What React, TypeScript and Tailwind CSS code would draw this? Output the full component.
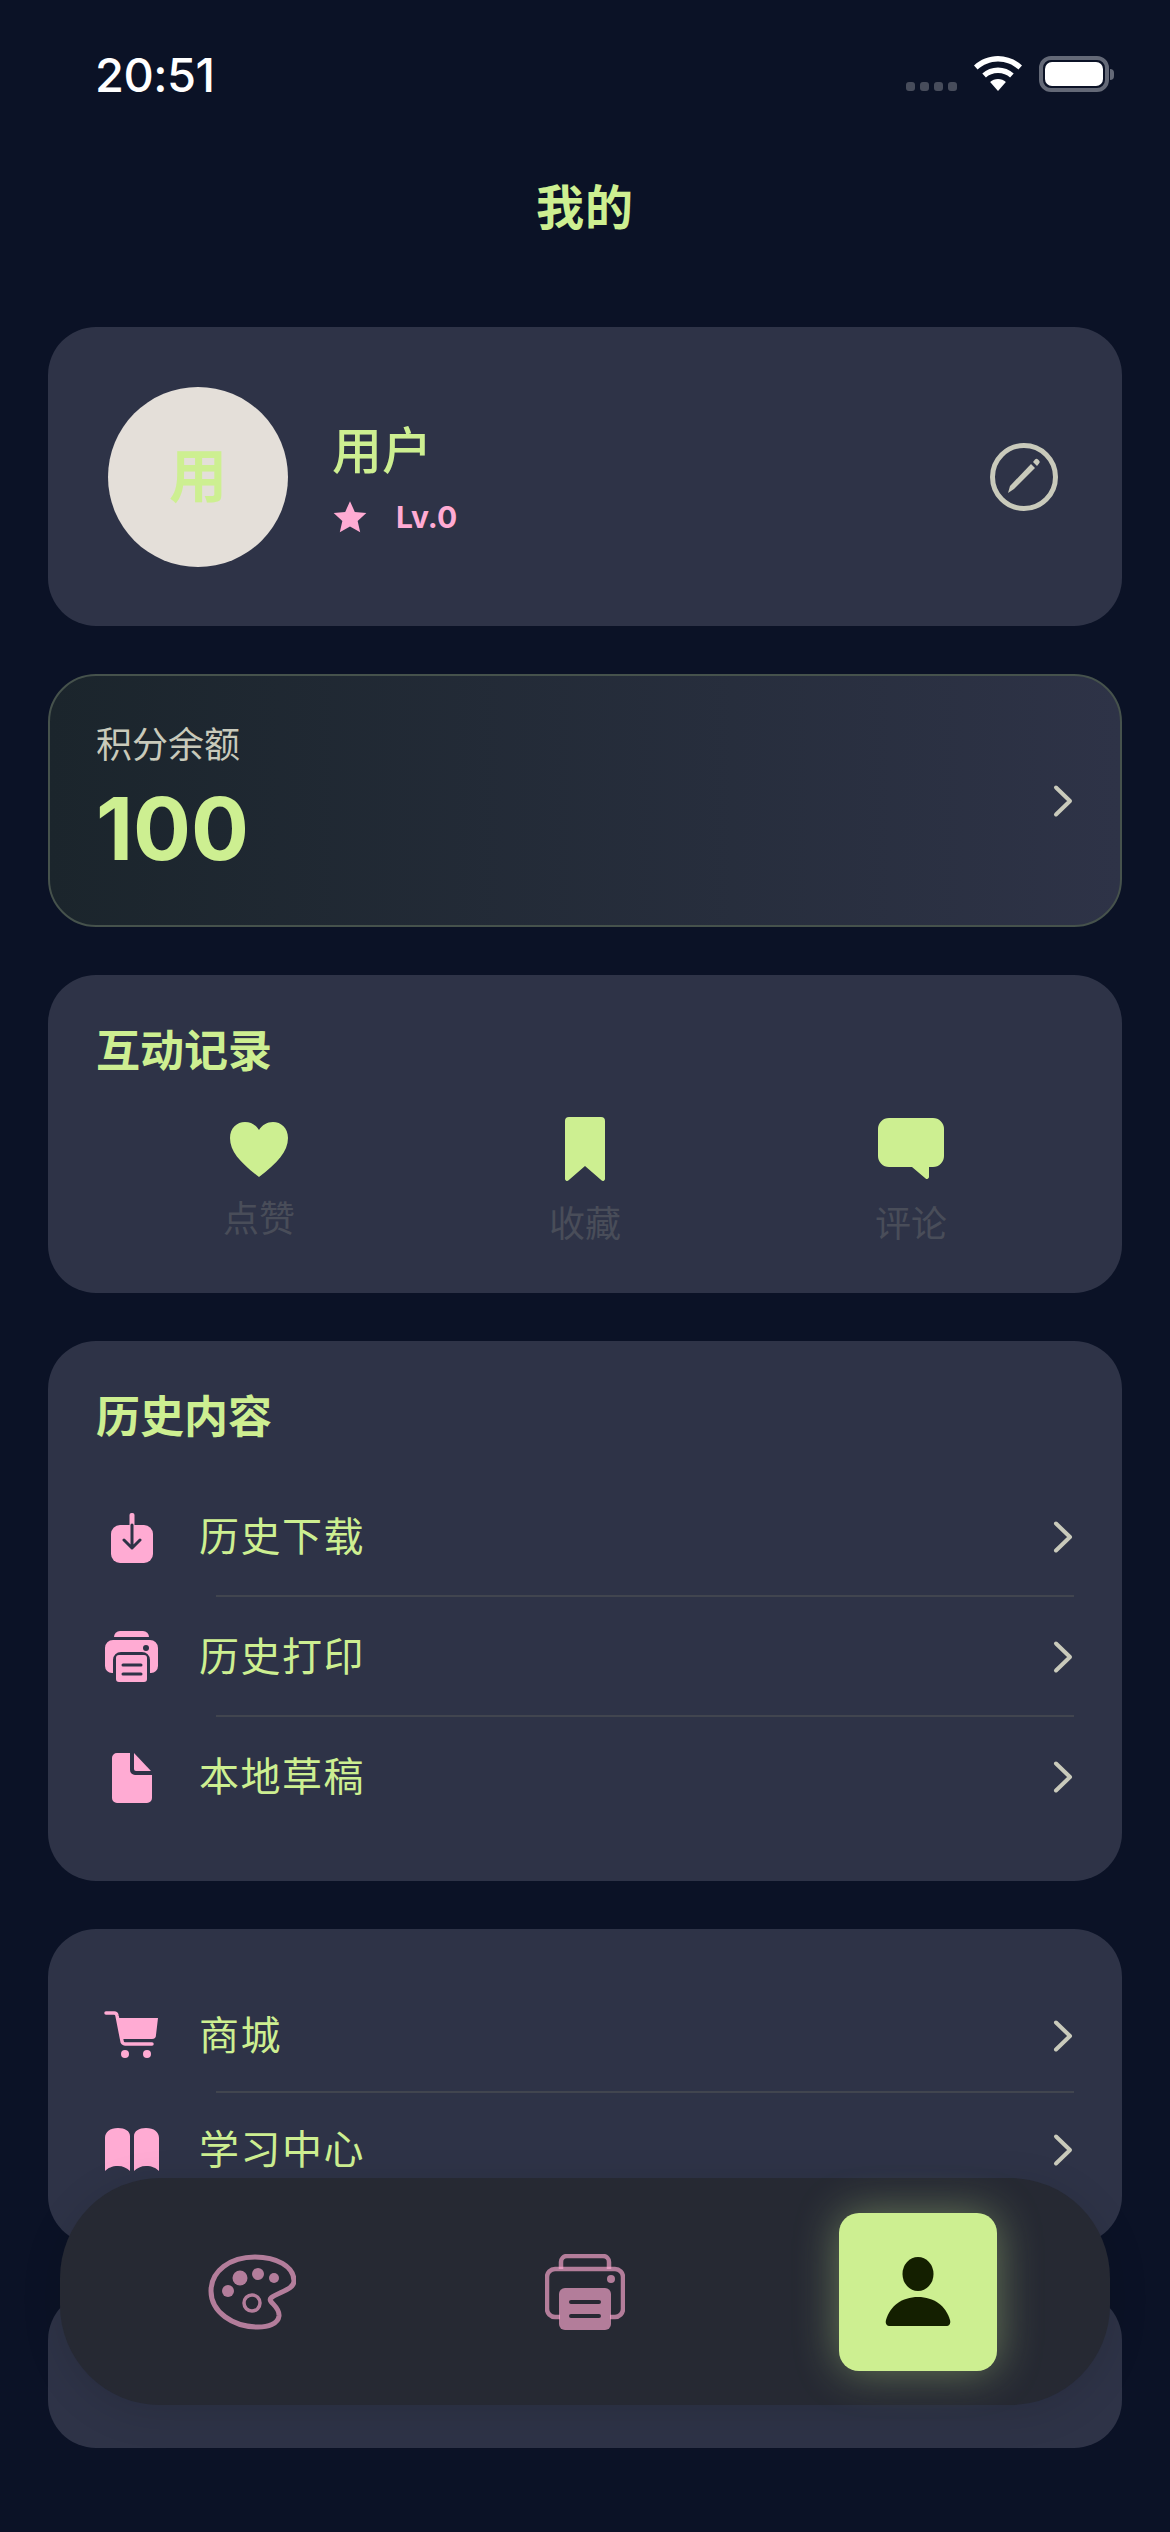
import { type ReactNode } from "react";

const CJK = "font-['Inter','Noto_Sans_CJK_SC',sans-serif]";

function Chevron() {
  return (
    <svg width="24" height="36" viewBox="0 0 24 36" fill="none" className="shrink-0 text-[#c9cabb]">
      <path d="M6 4.500l14 13.500-14 13.500" stroke="currentColor" strokeWidth="4" strokeLinecap="round" strokeLinejoin="round" />
    </svg>
  );
}

function DownloadIcon() {
  return (
    <svg width="64" height="64" viewBox="0 0 64 64">
      <rect x="11" y="20" width="42" height="38" rx="9" fill="#ffabd3" />
      <rect x="29.500" y="8" width="5" height="14" rx="2" fill="#ffabd3" />
      <path d="M32 20v23M24 35l8 8 8-8" fill="none" stroke="#2e3347" strokeWidth="3" strokeLinecap="round" strokeLinejoin="round" />
    </svg>
  );
}

function PrinterIcon() {
  return (
    <svg width="64" height="64" viewBox="0 0 64 64">
      <path d="M14 12a6 6 0 0 1 6-6h23a6 6 0 0 1 6 6z" fill="#ffabd3" />
      <path d="M13 15h37a8 8 0 0 1 8 8v18a7 7 0 0 1-7 7h-1V35a8 8 0 0 0-8-8H21a8 8 0 0 0-8 8v13h-1a7 7 0 0 1-7-7V23a8 8 0 0 1 8-8z" fill="#ffabd3" />
      <circle cx="46" cy="23" r="3" fill="#2e3347" />
      <rect x="16" y="30" width="31" height="27" rx="3" fill="#ffabd3" />
      <path d="M23 40h18M23 49h18" stroke="#2e3347" strokeWidth="3" strokeLinecap="round" />
    </svg>
  );
}

function FileIcon() {
  return (
    <svg width="64" height="64" viewBox="0 0 64 64">
      <path d="M17 8h13v17a5 5 0 0 0 5 5h17v23a5 5 0 0 1-5 5H17a5 5 0 0 1-5-5V13a5 5 0 0 1 5-5z" fill="#ffabd3" />
      <path d="M34 8l17 18H36a2 2 0 0 1-2-2z" fill="#ffabd3" />
    </svg>
  );
}

function CartIcon() {
  return (
    <svg width="64" height="64" viewBox="0 0 64 64">
      <path d="M6 9h8a3 3 0 0 1 3 2.500L22 37a3 3 0 0 0 3 3h27" fill="none" stroke="#ffabd3" strokeWidth="3.500" strokeLinecap="round" strokeLinejoin="round" />
      <path d="M17 14h41l-2 17a4 4 0 0 1-4 4H21z" fill="#ffabd3" />
      <circle cx="25" cy="50" r="4" fill="#ffabd3" />
      <circle cx="47" cy="50" r="4" fill="#ffabd3" />
    </svg>
  );
}

function BookIcon() {
  return (
    <svg width="64" height="64" viewBox="0 0 64 64">
      <path d="M30 18c0-5-5-8-12-8C10 10 5 14 5 20v33c3-3 7-5 13-5 5 0 9 2 12 5z" fill="#ffabd3" />
      <path d="M34 18c0-5 5-8 12-8 8 0 13 4 13 10v33c-3-3-7-5-13-5-5 0-9 2-12 5z" fill="#ffabd3" />
    </svg>
  );
}

function MenuRow({ icon, label, divider = false, height }: { icon: ReactNode; label: string; divider?: boolean; height: string }) {
  return (
    <div className={`relative flex items-center ${height}`}>
      <div className="flex w-[103px] shrink-0 items-center pl-[4px]">{icon}</div>
      <span className="flex-1 text-[40px] leading-none tracking-[1.500px] text-[#cdef91]">{label}</span>
      <Chevron />
      {divider ? <div className="absolute bottom-0 left-[120px] right-0 h-[2px] bg-[#41454f]" /> : null}
    </div>
  );
}

function Card({ className = "", children }: { className?: string; children: ReactNode }) {
  return <section className={`mx-[48px] rounded-[48px] ${className}`}>{children}</section>;
}

export default function App() {
  return (
    <div className={`relative h-[2532px] w-[1170px] overflow-hidden bg-[#0b1226] ${CJK}`}>
      <div className="flex h-[327px] flex-col">
        <div className="flex h-[150px] items-start justify-between pl-[95px] pr-[56px] pt-[48px]">
          <span className="text-[47px] font-medium leading-[54px] tracking-[-0.5px] text-white">20:51</span>
          <div className="flex items-start gap-[17px] pt-[8px]">
            <div className="flex gap-[5px] pt-[26px]">
              <span className="h-[9px] w-[9px] rounded-[3px] bg-[#474c5b]" />
              <span className="h-[9px] w-[9px] rounded-[3px] bg-[#474c5b]" />
              <span className="h-[9px] w-[9px] rounded-[3px] bg-[#474c5b]" />
              <span className="h-[9px] w-[9px] rounded-[3px] bg-[#474c5b]" />
            </div>
            <svg width="48" height="36" viewBox="0 0 48 36" fill="#fff">
              <path d="M24 0c9 0 17.500 3.500 24 9.500l-3.600 4C38.900 8.500 31.700 5.500 24 5.500S9.100 8.500 3.600 13.500L0 9.500C6.500 3.500 15 0 24 0z" />
              <path d="M24 11.500c6 0 11.500 2.300 15.700 6l-3.600 4C33 18.700 28.700 17 24 17s-9 1.700-12.100 4.500l-3.600-4c4.200-3.700 9.700-6 15.700-6z" />
              <path d="M24 23c3 0 5.800 1.100 7.900 3L24 35l-7.900-9c2.100-1.900 4.900-3 7.900-3z" />
            </svg>
            <div className="flex items-center">
              <div className="h-[36px] w-[70px] rounded-[12px] border-[4px] border-[#646977] p-[2px]">
                <div className="h-full w-full rounded-[7px] bg-white" />
              </div>
              <div className="ml-[1px] h-[11px] w-[4px] rounded-r-[4px] bg-[#646977]" />
            </div>
          </div>
        </div>
        <h1 className="pt-[30px] text-center text-[48px] font-bold leading-[56px] tracking-[1px] text-[#cdef91]">我的</h1>
      </div>

      <div className="flex flex-col gap-[48px]">
        <Card className="flex h-[299px] items-center bg-[#2e3347] pl-[60px] pr-[64px]">
          <div className="flex h-[180px] w-[180px] items-center justify-center rounded-full bg-[#e4dfd9] text-[58px] font-semibold text-[#cdef91]">用</div>
          <div className="ml-[44px] flex flex-1 flex-col">
            <span className="text-[50px] font-medium leading-[64px] text-[#cdef91]">用户</span>
            <div className="mt-[16px] flex items-center gap-[28px]">
              <svg width="36" height="36" viewBox="0 0 24 24" fill="#ffabd3">
                <path d="M12 1.500l3.200 7.100 7.700.8-5.800 5.200 1.700 7.600L12 18.300l-6.800 3.900 1.700-7.600L1.100 9.400l7.700-.8z" />
              </svg>
              <span className="text-[30px] font-bold leading-[36px] text-[#ffabd3]">Lv.0</span>
            </div>
          </div>
          <svg width="68" height="68" viewBox="0 0 68 68" fill="none">
            <circle cx="34" cy="34" r="31.500" stroke="#c9cabb" strokeWidth="5" />
            <path d="M18 50l2-7 21-22 4 4-21 21z" fill="#c9cabb" />
            <path d="M43 19l2-2.500a2 2 0 0 1 3 0l1 1a2 2 0 0 1 0 3l-2 2.500z" fill="#c9cabb" />
          </svg>
        </Card>

        <Card className="flex h-[253px] items-center justify-between border-2 border-[#46524c] bg-gradient-to-r from-[#1b252c] to-[#2e3347] px-[46px]">
          <div className="mb-[4px] flex flex-col">
            <span className="text-[36px] leading-[48px] text-[#c9cabb]">积分余额</span>
            <span className="mt-[12px] text-[86px] font-bold leading-[96px] text-[#cdef91]">100</span>
          </div>
          <Chevron />
        </Card>

        <Card className="h-[318px] bg-[#2e3347] px-[48px] pt-[48px]">
          <h2 className="text-[44px] font-bold leading-[56px] text-[#cdef91]">互动记录</h2>
          <div className="mt-[38px] grid grid-cols-3">
            <div className="flex flex-col items-center">
              <svg width="64" height="64" viewBox="0 0 64 64" fill="#cdef91">
                <path d="M32 60C14 46 3 35 3 21 3 11 10 5 18 5c6 0 11 3 14 8 3-5 8-8 14-8 8 0 15 6 15 16 0 14-11 25-29 39z" />
              </svg>
              <span className="mt-[16px] text-[36px] leading-[44px] text-[#494d59]">点赞</span>
            </div>
            <div className="flex flex-col items-center">
              <svg width="64" height="64" viewBox="0 0 64 64" fill="#cdef91">
                <path d="M16 0h32a4 4 0 0 1 4 4v58a2 2 0 0 1-3.300 1.500L32 49 15.300 63.500A2 2 0 0 1 12 62V4a4 4 0 0 1 4-4z" />
              </svg>
              <span className="mt-[21px] text-[36px] leading-[44px] text-[#494d59]">收藏</span>
            </div>
            <div className="flex flex-col items-center">
              <svg width="68" height="64" viewBox="0 0 68 64" fill="#cdef91">
                <path d="M12 1h44a11 11 0 0 1 11 11v27a11 11 0 0 1-11 11h-4v10a2 2 0 0 1-3.400 1.400L35 50H12A11 11 0 0 1 1 39V12A11 11 0 0 1 12 1z" />
              </svg>
              <span className="mt-[21px] text-[36px] leading-[44px] text-[#494d59]">评论</span>
            </div>
          </div>
        </Card>

        <Card className="h-[540px] bg-[#2e3347] px-[48px] pt-[48px]">
          <h2 className="text-[44px] font-bold leading-[56px] text-[#cdef91]">历史内容</h2>
          <div className="mt-[32px] flex flex-col">
            <MenuRow icon={<DownloadIcon />} label="历史下载" divider height="h-[120px]" />
            <MenuRow icon={<PrinterIcon />} label="历史打印" divider height="h-[120px]" />
            <MenuRow icon={<FileIcon />} label="本地草稿" height="h-[120px]" />
          </div>
        </Card>

        <Card className="h-[315px] bg-[#2e3347] px-[48px] pt-[50px]">
          <MenuRow icon={<CartIcon />} label="商城" divider height="h-[114px]" />
          <MenuRow icon={<BookIcon />} label="学习中心" height="h-[114px]" />
        </Card>

        <Card className="h-[156px] bg-[#2e3347]">{null}</Card>
      </div>

      <nav className="absolute left-[60px] top-[2178px] grid h-[227px] w-[1050px] grid-cols-3 items-center rounded-[100px] bg-[#262933] px-[25px] shadow-[0_8px_40px_rgba(0,0,0,0.12)]">
        <div className="flex justify-center">
          <svg width="88" height="76" viewBox="0 0 88 76" fill="none" className="opacity-65">
            <path d="M47 3c21 0 39 9 39 24 0 9-16 11-23 17-4 4 9 8 8 18-1 8-11 11-21 11C25 73 3 58 3 37 3 17 22 3 47 3z" stroke="#ffabd3" strokeWidth="5" />
            <circle cx="32" cy="24" r="7.500" fill="#ffabd3" />
            <circle cx="50" cy="20" r="6" fill="#ffabd3" />
            <circle cx="66" cy="24" r="5" fill="#ffabd3" />
            <circle cx="20" cy="37" r="6" fill="#ffabd3" />
            <circle cx="44" cy="49" r="8" stroke="#ffabd3" strokeWidth="3.500" />
          </svg>
        </div>
        <div className="flex justify-center">
          <svg width="80" height="76" viewBox="0 0 80 76" fill="none">
            <path d="M16 15V8a6 6 0 0 1 6-6h36a6 6 0 0 1 6 6v7" stroke="#ffabd3" strokeWidth="4.500" opacity=".65" />
            <path d="M15 63h-5a8 8 0 0 1-8-8V23a8 8 0 0 1 8-8h60a8 8 0 0 1 8 8v32a8 8 0 0 1-8 8h-5" stroke="#ffabd3" strokeWidth="4.500" opacity=".65" />
            <circle cx="66" cy="25" r="4" fill="#ffabd3" opacity=".65" />
            <rect x="14" y="34" width="52" height="42" rx="6" fill="#ffabd3" opacity=".65" />
            <path d="M26 48h28M26 62h28" stroke="#262933" strokeWidth="4" strokeLinecap="round" />
          </svg>
        </div>
        <div className="flex justify-center">
          <div className="flex h-[158px] w-[158px] items-center justify-center rounded-[20px] bg-[#cdef91] shadow-[0_0_44px_rgba(205,239,145,0.4)]">
            <svg width="66" height="72" viewBox="0 0 66 72" fill="#141f00">
              <ellipse cx="33" cy="18" rx="15.500" ry="17" />
              <path d="M1 64C5 50 17 41 33 41s28 9 32 23c1 4-1 6-4 6H5c-3 0-5-2-4-6z" />
            </svg>
          </div>
        </div>
      </nav>
    </div>
  );
}
